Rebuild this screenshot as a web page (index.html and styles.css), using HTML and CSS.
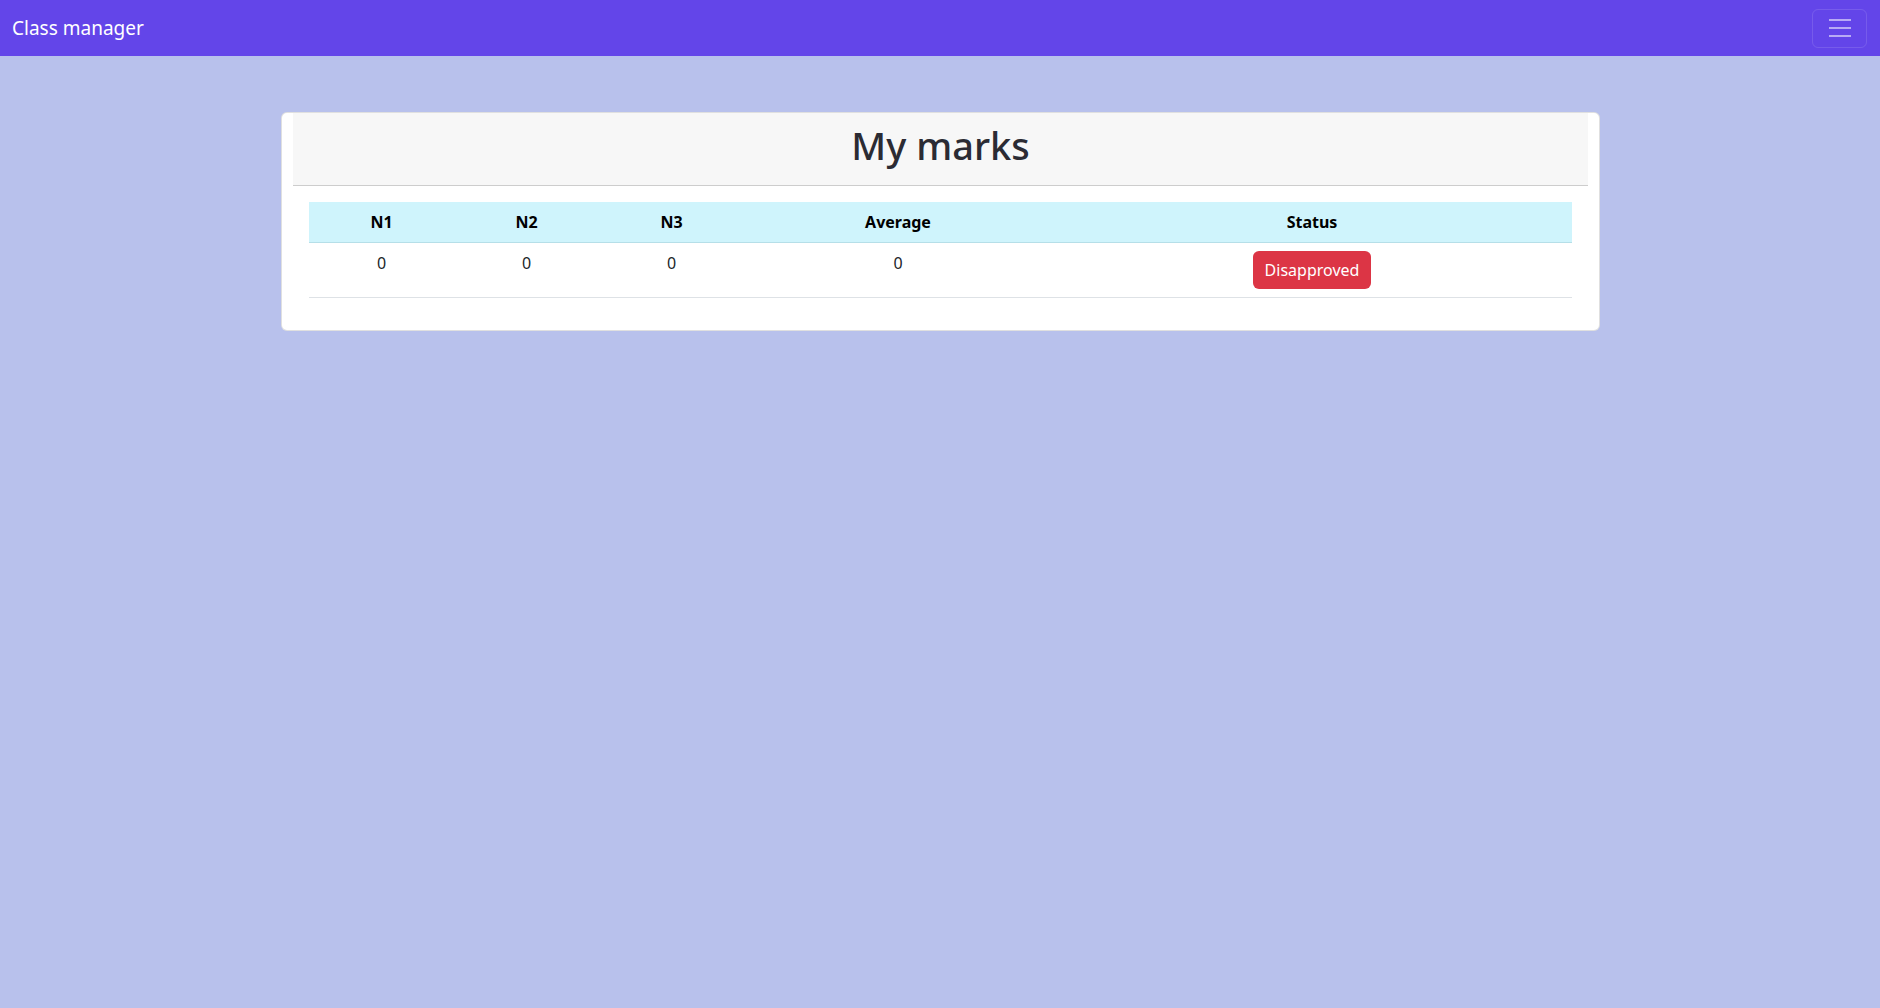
FILE: index.html
```html
<!DOCTYPE html>
<html lang="en">
<head>
<meta charset="utf-8">
<title>Class manager</title>
<link rel="stylesheet" href="styles.css">
</head>
<body>
<nav class="navbar">
  <span class="brand">Class manager</span>
  <button class="toggler" aria-label="Toggle navigation">
    <svg width="30" height="30" viewBox="0 0 30 30"><path d="M4 7h22M4 15h22M4 23h22" stroke="rgba(255,255,255,0.55)" stroke-width="2" stroke-linecap="butt" fill="none"/></svg>
  </button>
</nav>
<main class="main">
  <section class="card">
    <header class="card-header"><h1 class="title">My marks</h1></header>
    <div class="card-body">
      <table class="marks">
        <thead>
          <tr><th class="c-n">N1</th><th class="c-n">N2</th><th class="c-n">N3</th><th class="c-avg">Average</th><th class="c-status">Status</th></tr>
        </thead>
        <tbody>
          <tr><td>0</td><td>0</td><td>0</td><td>0</td><td><span class="badge-btn">Disapproved</span></td></tr>
        </tbody>
      </table>
    </div>
  </section>
</main>
</body>
</html>
```

FILE: styles.css
```css
* { box-sizing: border-box; }
html, body { margin: 0; padding: 0; }
body {
  font-family: "Noto Sans", "Open Sans", sans-serif;
  font-size: 16px;
  line-height: 1.5;
  color: #212529;
  background: #b8c1ec;
  min-height: 1008px;
}
.navbar {
  height: 56px;
  background: #6345e9;
  display: flex;
  align-items: center;
  justify-content: space-between;
  padding: 0 13px 0 12px;
}
.brand {
  color: #fff;
  font-size: 19px;
  line-height: 1.5;
}
.toggler {
  width: 55px;
  height: 39px;
  border: 1px solid rgba(255,255,255,0.12);
  border-radius: 6px;
  background: transparent;
  display: flex;
  align-items: center;
  justify-content: center;
  padding: 0;
}
.main {
  padding: 56px 280px 0 281px;
}
.card {
  background: #fff;
  border: 1px solid rgba(0,0,0,0.12);
  border-radius: 6px;
  padding: 0 11px;
}
.card-header {
  background: #f7f7f7;
  border-bottom: 1px solid #cdcdcd;
  padding: 8px 0 16px;
  text-align: center;
}
.title {
  margin: 0;
  font-size: 38px;
  font-weight: 500;
  line-height: 48px;
  color: #2b2b33;
}
.card-body {
  padding: 16px;
}
.marks {
  width: 100%;
  border-collapse: collapse;
  margin-bottom: 16px;
  text-align: center;
}
.marks th {
  background: #cff4fc;
  color: #000;
  font-weight: 700;
  padding: 8px;
  border-bottom: 1px solid #b6dfe8;
}
.c-n { width: 145px; }
.c-avg { width: 308px; }
.marks td {
  padding: 8px;
  vertical-align: top;
  border-bottom: 1px solid #dee2e6;
}
.badge-btn {
  display: inline-block;
  background: #dc3545;
  color: #fff;
  border-radius: 6px;
  padding: 6px 12px;
  line-height: 26px;
  height: 38px;
}
```
